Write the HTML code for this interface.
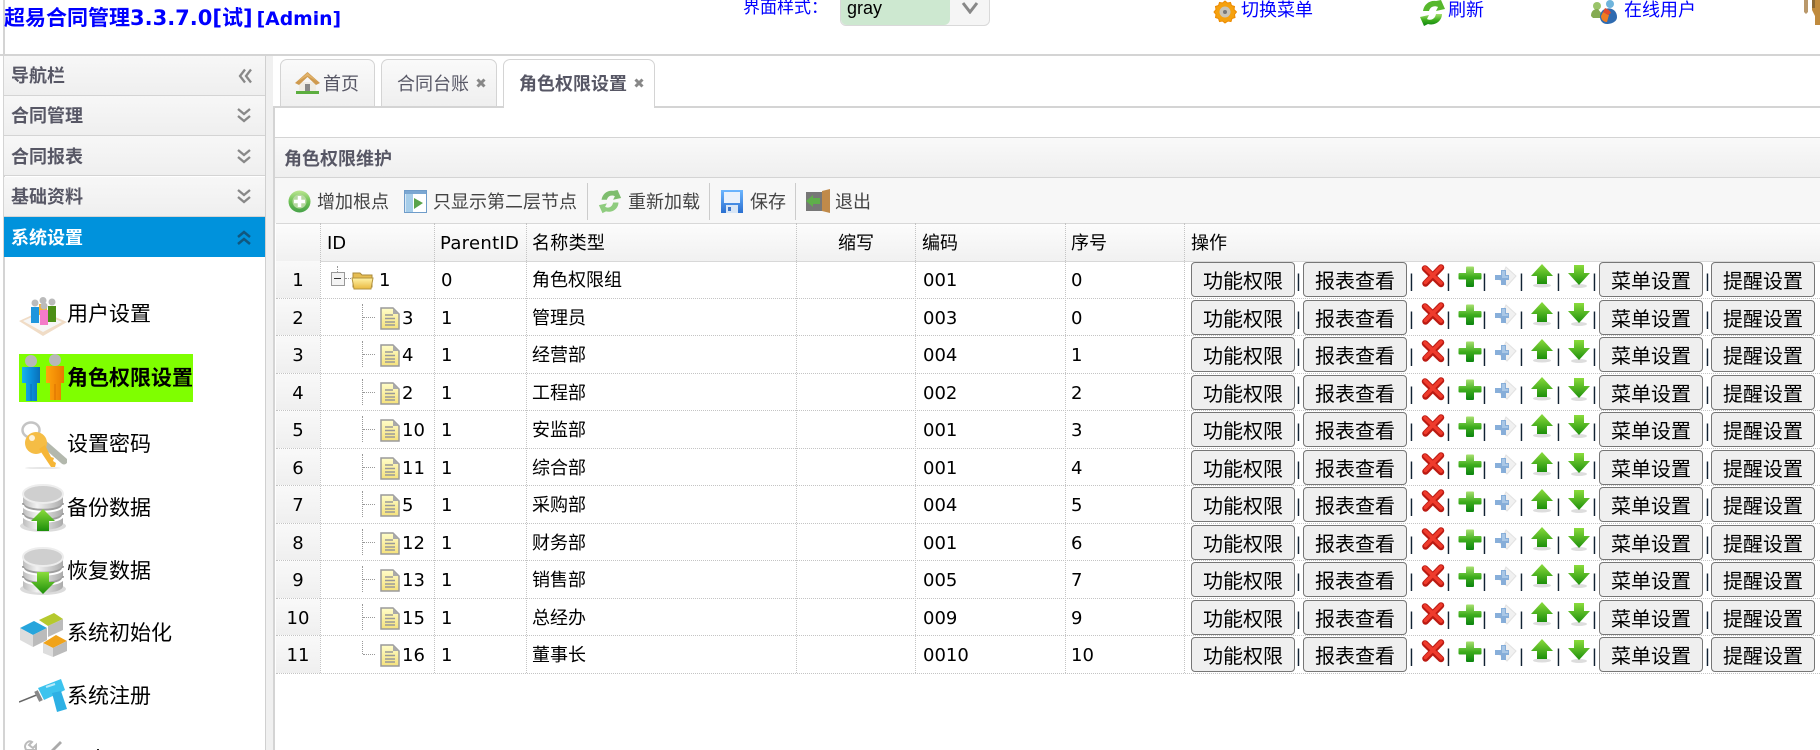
<!DOCTYPE html>
<html lang="zh"><head><meta charset="utf-8"><title>角色权限设置</title>
<style>
html,body{margin:0;padding:0;width:1820px;height:750px;overflow:hidden;background:#fff}
body{position:relative;font-family:"DejaVu Sans","Noto Sans CJK SC",sans-serif;font-size:18px;color:#000}
.a,.t,.r,.r *{position:absolute}
.t,.r i{white-space:nowrap;line-height:24px;font-style:normal}
.nav{left:4px;width:261px;height:39px;background:linear-gradient(#f7f7f7,#efefef);border-bottom:1px solid #d4d4d4}
.nav b{position:absolute;left:7px;top:9px;line-height:24px;color:#575765;font-size:18px}
.m{left:67px;font-size:21px;line-height:28px;white-space:nowrap}
.l{color:#00f}
.tb{color:#444;top:191px}
.tab{top:73px;color:#575765}
.h{color:#000;top:232px}
.vl{top:223px;height:450px;width:0;border-left:1px dotted #c4c4c4}
.r{left:276px;width:1544px;box-sizing:border-box;border-bottom:1px dotted #c4c4c4}
.r .n{left:0;top:0;bottom:0;width:44px;background:linear-gradient(#f9f9f9,#efefef);text-align:center;line-height:39px}
.r .v{top:8px}
.r svg{top:3px;width:24px;height:24px}
.r button{top:1px;width:104px;height:35px;padding:0;margin:0;box-sizing:border-box;background:#efefef;border:1px solid #767676;border-radius:4px;font:20px/24px "Noto Sans CJK SC",sans-serif;color:#000}
.r u{text-decoration:none;top:8px;font:18px/24px "Liberation Sans",sans-serif;width:5px;text-align:center;color:#123}
</style></head>
<body>
<svg width="0" height="0" style="position:absolute">
<defs>
<linearGradient id="g1" x1="0" y1="0" x2="0" y2="1"><stop offset="0" stop-color="#a8e070"/><stop offset=".5" stop-color="#3fae1d"/><stop offset="1" stop-color="#0c8410"/></linearGradient>
<linearGradient id="g2" x1="0" y1="0" x2="0" y2="1"><stop offset="0" stop-color="#8bdc3c"/><stop offset="1" stop-color="#1c8f0a"/></linearGradient>
<linearGradient id="g3" x1="0" y1="0" x2="1" y2="0"><stop offset="0" stop-color="#bdbdbd"/><stop offset=".35" stop-color="#f2f2f2"/><stop offset="1" stop-color="#aaa"/></linearGradient>
<linearGradient id="g4" x1="0" y1="0" x2="0" y2="1"><stop offset="0" stop-color="#6cb6ff"/><stop offset="1" stop-color="#2a6fd0"/></linearGradient>
<linearGradient id="g5" x1="0" y1="0" x2="0" y2="1"><stop offset="0" stop-color="#fff3a8"/><stop offset="1" stop-color="#e9b93f"/></linearGradient>
<linearGradient id="g6" x1="0" y1="0" x2="1" y2="0"><stop offset="0" stop-color="#16b5ee"/><stop offset=".5" stop-color="#0b90dc"/><stop offset="1" stop-color="#0a6fb8"/></linearGradient>
<linearGradient id="g7" x1="0" y1="0" x2="1" y2="0"><stop offset="0" stop-color="#ffa60d"/><stop offset="1" stop-color="#e87a00"/></linearGradient>
<linearGradient id="g8" x1="0" y1="0" x2="0" y2="1"><stop offset="0" stop-color="#fffdc8"/><stop offset="1" stop-color="#f6e27c"/></linearGradient>
<symbol id="ix" viewBox="0 0 24 24"><path d="M4 4.500 20 20M20 3.500 4.500 19.500" stroke="#bb1a12" stroke-width="6.500" stroke-linecap="round" fill="none"/><path d="M4 3.800 20 19M20 3 4.500 18.500" stroke="#ef3b2c" stroke-width="3.500" stroke-linecap="round" fill="none"/></symbol>
<symbol id="ip" viewBox="0 0 24 24"><path d="M9 2.500h6a1 1 0 0 1 1 1V9h6.500a1 1 0 0 1 1 1v4.500a1 1 0 0 1-1 1H16V22a1 1 0 0 1-1 1H9a1 1 0 0 1-1-1v-6.500H1.500a1 1 0 0 1-1-1V10a1 1 0 0 1 1-1H8V3.500a1 1 0 0 1 1-1z" fill="url(#g1)"/></symbol>
<symbol id="id" viewBox="0 0 24 24"><path d="M13 3 23 12 14 22 7 16z" fill="#f1f1f1" stroke="#e2e2e2"/><path d="M8 6h5v5h3v5h-3v5H8v-5H2v-5h6z" fill="#7ba6d6" opacity=".9"/><path d="M9 7h3v5h3v2H9z" fill="#a9c7e6"/></symbol>
<symbol id="iu" viewBox="0 0 24 24"><ellipse cx="12" cy="21.500" rx="9" ry="2" fill="#ddd"/><path d="M12 0 23 12H17V20H7V12H1z" fill="url(#g2)"/></symbol>
<symbol id="iv" viewBox="0 0 24 24"><ellipse cx="12" cy="22" rx="8" ry="2" fill="#ddd"/><path d="M7 1H17V9H23L12 21 1 9H7z" fill="url(#g2)"/></symbol>
<symbol id="if" viewBox="0 0 20 24"><path d="M1 2H13L19 8V23H1z" fill="url(#g8)" stroke="#9a9a9a" stroke-width="1.500"/><path d="M13 2V8H19z" fill="#aaa"/><path d="M5 9H13M5 12.500H15M5 16H15M5 19H15" stroke="#999" stroke-width="1.500"/></symbol>
<symbol id="dv" viewBox="0 0 16 15"><path d="M2 1 8 6 14 1M2 8 8 13 14 8" stroke="#888" stroke-width="2.300" fill="none"/></symbol>
<symbol id="cl" viewBox="0 0 10 10"><path d="M1.500 1.500 8.500 8.500M8.500 1.500 1.500 8.500" stroke="#888" stroke-width="3"/></symbol>
<symbol id="db" viewBox="0 0 48 48"><ellipse cx="24" cy="42" rx="23" ry="6" fill="#ccc" opacity=".7"/><path d="M4 9V39C4 48 44 48 44 39V9z" fill="url(#g3)"/><path d="M4 19C4 28 44 28 44 19M4 29C4 38 44 38 44 29" stroke="#9e9e9e" stroke-width="2" fill="none"/><path d="M4 21C4 30 44 30 44 21M4 31C4 40 44 40 44 31" stroke="#fff" stroke-width="2" fill="none"/><ellipse cx="24" cy="10" rx="20" ry="9" fill="#cfcfcf" stroke="#ededed" stroke-width="2"/></symbol>
</defs>
</svg>

<!-- top header -->
<div class="a" style="left:3px;top:0;width:2px;height:750px;background:#d4d4d4"></div>
<div class="t l" style="left:4px;top:4px;line-height:28px;font-weight:bold;font-size:21px;color:#00f">超易合同管理3.3.7.0[试]<span style="font-size:18.800px;margin-left:4px">[Admin]</span></div>
<div class="t l" style="left:743px;top:-4px;font-size:17px">界面样式：</div>
<div class="a" style="left:840px;top:-5px;width:148px;height:29px;border:1px solid #d9d9d9;border-radius:6px;background:#f5f5f5"></div>
<div class="a" style="left:841px;top:-4px;width:109px;height:29px;border-radius:0 0 6px 6px;background:#cde8d0"></div>
<div class="t" style="left:847px;top:-4px;font-family:'Liberation Sans',sans-serif">gray</div>
<svg class="a" style="left:961px;top:2px" width="18" height="12"><path d="M2 1 9 10 16 1" stroke="#888" stroke-width="3" fill="none"/></svg>

<svg class="a" style="left:1213px;top:0" width="24" height="24" viewBox="0 0 24 24"><path d="M12 1l2.500 2 3-.5 1 3 3 1-.5 3 2.500 2.500-2 2.500.5 3-3 1-1 3-3-.5L12 23l-2.500-2-3 .5-1-3-3-1 .5-3L1 12l2-2.500-.5-3 3-1 1-3 3 .5z" fill="#f5a10e" stroke="#ed8a00"/><circle cx="12" cy="12" r="5.500" fill="#c9c4b8"/><circle cx="12" cy="12" r="2" fill="#777"/></svg>
<div class="t l" style="left:1241px;top:-1px">切换菜单</div>
<svg class="a" style="left:1419px;top:0" width="27" height="27" viewBox="0 0 27 27"><path d="M4 11C5 4 11 0 17 1L22 0 26 9 17 11 19 7C15 5 11 7 10 11z" fill="#57b82d"/><path d="M23 14C23 21 16 26 9 24L5 26 1 17 10 15 8 19C12 21 16 19 17 14z" fill="url(#g1)"/></svg>
<div class="t l" style="left:1448px;top:-1px">刷新</div>
<svg class="a" style="left:1590px;top:0" width="28" height="24" viewBox="0 0 28 24"><ellipse cx="20" cy="4" rx="4" ry="4" fill="#6fb4dc"/><ellipse cx="7" cy="6" rx="4" ry="4" fill="#9ac46a"/><path d="M1 16C1 10 5 9 8 9L12 14V18H3z" fill="#85ab52"/><path d="M13 10C20 6 27 10 27 17 27 22 21 24 17 24 13 24 10 21 10 17 10 14 11 12 13 10z" fill="#2f6bb0"/><path d="M13 12 19 15 17 22C13 22 11 19 11 16z" fill="#ef7d22"/><path d="M15 8C17 9 20 10 21 13L18 15 13 12z" fill="#e14b2e"/></svg>
<div class="t l" style="left:1624px;top:-1px">在线用户</div>
<svg class="a" style="left:1803px;top:0" width="17" height="26" viewBox="0 0 17 26"><path d="M1 0H5V12L3 14 1 12z" fill="#b9986b"/><path d="M9 0H17V25H12V16L9 10z" fill="#c08b3e"/><path d="M9 0H12V8L9 8z" fill="#8d6a35"/></svg>
<div class="a" style="left:0;top:54px;width:1820px;height:2px;background:#d4d4d4"></div>

<!-- accordion -->
<div class="a nav" style="top:56px"><b>导航栏</b></div>
<div class="a nav" style="top:96px"><b>合同管理</b></div>
<div class="a nav" style="top:136px"><b style="top:10px">合同报表</b></div>
<div class="a nav" style="top:177px"><b>基础资料</b></div>
<div class="a" style="left:4px;top:217px;width:261px;height:40px;background:#0092dc"><b style="position:absolute;left:7px;top:10px;line-height:24px;color:#fff">系统设置</b></div>
<svg class="a" style="left:238px;top:68px" width="15" height="16" viewBox="0 0 15 15"><path d="M7 1 2 7.500 7 14M13 1 8 7.500 13 14" stroke="#888" stroke-width="2.300" fill="none"/></svg>
<svg class="a" style="left:236px;top:108px;width:16px;height:15px"><use href="#dv"/></svg>
<svg class="a" style="left:236px;top:149px;width:16px;height:15px"><use href="#dv"/></svg>
<svg class="a" style="left:236px;top:189px;width:16px;height:15px"><use href="#dv"/></svg>
<svg class="a" style="left:236px;top:230px" width="16" height="15" viewBox="0 0 16 15"><path d="M2 7 8 2 14 7M2 14 8 9 14 14" stroke="#11577f" stroke-width="2.500" fill="none"/></svg>
<div class="a" style="left:265px;top:56px;width:1px;height:694px;background:#d0d0d0"></div>
<div class="a" style="left:266px;top:56px;width:7px;height:694px;background:#f0f0f0"></div>

<!-- left menu -->
<svg class="a" style="left:19px;top:297px" width="48" height="39" viewBox="0 0 48 39"><path d="M0 24 22 14 48 25 24 39z" fill="#f0dcc6"/><path d="M4 24 22 16 43 25 24 35z" fill="#f6f6f6"/><circle cx="33" cy="5" r="3.500" fill="#bbb"/><path d="M29 9H37V25H29z" fill="#4c8f16"/><circle cx="24" cy="3.500" r="3.500" fill="#bbb"/><path d="M20 7H28V18H20z" fill="#f3b43d"/><circle cx="16" cy="6" r="3.500" fill="#bbb"/><path d="M12 10H20V26H12z" fill="#1e96dd"/><circle cx="25" cy="9" r="3.500" fill="#bbb"/><path d="M21 13H29V28H21z" fill="#f47bc8"/></svg>
<div class="t m" style="top:300px">用户设置</div>

<div class="a" style="left:19px;top:354px;width:174px;height:48px;background:#7fff00"></div>
<svg class="a" style="left:19px;top:354px" width="48" height="48" viewBox="0 0 48 48"><circle cx="12" cy="7" r="6" fill="#b8b8b8"/><path d="M3 13H21V29H18V47H7V29H3z" fill="url(#g6)"/><path d="M12 30V47" stroke="#0a6fb8"/><circle cx="36" cy="6" r="6" fill="#b8b8b8"/><path d="M27 12H45V29H42V46H31V29H27z" fill="url(#g7)"/><path d="M36 30V46" stroke="#d96f00"/></svg>
<div class="t m" style="top:364px;font-weight:bold">角色权限设置</div>

<svg class="a" style="left:19px;top:421px" width="48" height="48" viewBox="0 0 48 48"><path d="M22 20 45 40" stroke="#b3b8ad" stroke-width="7" stroke-linecap="round"/><ellipse cx="12" cy="9" rx="8.500" ry="7.500" fill="none" stroke="#c4c4c4" stroke-width="2.500"/><circle cx="17" cy="22" r="11" fill="#f5bd45"/><circle cx="13" cy="17" r="3" fill="#fff" opacity=".8"/><path d="M20 28 32 46H36L37 42 34 40 35 37 32 36 26 24z" fill="#f6b636"/><ellipse cx="24" cy="47" rx="18" ry="1" fill="#e5e5e5"/></svg>
<div class="t m" style="top:430px">设置密码</div>

<svg class="a" style="left:19px;top:484px;width:48px;height:48px"><use href="#db"/><path d="M24 25 36 37H30V47H18V37H12z" fill="url(#g2)"/></svg>
<div class="t m" style="top:494px">备份数据</div>
<svg class="a" style="left:19px;top:547px;width:48px;height:48px"><use href="#db"/><path d="M18 25H30V35H36L24 47 12 35H18z" fill="url(#g2)"/></svg>
<div class="t m" style="top:557px">恢复数据</div>

<svg class="a" style="left:19px;top:613px" width="48" height="44" viewBox="0 0 48 44"><path d="M1 15 15 8 28 15 14 22z" fill="#27a5dc"/><path d="M1 15V27L14 34V22z" fill="#ddd"/><path d="M14 22V34L28 27V15z" fill="#bbb"/><path d="M20 7 35 0 44 6 29 13z" fill="#b5c92e"/><path d="M29 13V24L44 17V6z" fill="#bbb"/><path d="M24 30 37 22 48 28 34 35z" fill="#f0a31a"/><path d="M24 30V40L34 44V35z" fill="#ddd"/><path d="M34 35V44L48 38V28z" fill="#bbb"/></svg>
<div class="t m" style="top:619px">系统初始化</div>

<svg class="a" style="left:19px;top:679px" width="48" height="33" viewBox="0 0 48 33"><path d="M0 23 20 15" stroke="#666" stroke-width="1.500"/><path d="M17 12 22 22" stroke="#888" stroke-width="4"/><path d="M19 9 42 0 46 11 38 15 25 21z" fill="#3cc3ee"/><path d="M33 14 42 12 48 30 38 33z" fill="#2db0e4"/><path d="M27 8 36 5" stroke="#b8eafa" stroke-width="2"/></svg>
<div class="t m" style="top:682px">系统注册</div>

<svg class="a" style="left:23px;top:739px" width="42" height="11" viewBox="0 0 42 11"><path d="M2 8C2 4 6 1 9 3L6 6 10 9 13 6V11H3z" fill="none" stroke="#bbb" stroke-width="2"/><path d="M28 11 37 2 39 4 32 11z" fill="#aaa"/></svg>
<div class="a" style="left:97px;top:749px;width:2px;height:1px;background:#222"></div>

<!-- tabs -->
<div class="a" style="left:273px;top:106px;width:1547px;height:2px;background:#d4d4d4"></div>
<div class="a" style="left:273px;top:106px;width:2px;height:644px;background:#d4d4d4"></div>
<div class="a" style="left:280px;top:59px;width:95px;height:47px;box-sizing:border-box;border:1px solid #d4d4d4;border-bottom:0;border-radius:7px 7px 0 0;background:linear-gradient(#fafafa,#efefef)"></div>
<div class="a" style="left:381px;top:59px;width:116px;height:47px;box-sizing:border-box;border:1px solid #d4d4d4;border-bottom:0;border-radius:7px 7px 0 0;background:linear-gradient(#fafafa,#efefef)"></div>
<div class="a" style="left:503px;top:59px;width:152px;height:49px;box-sizing:border-box;border:1px solid #d4d4d4;border-bottom:0;border-radius:7px 7px 0 0;background:#fff"></div>
<svg class="a" style="left:295px;top:71px" width="25" height="23" viewBox="0 0 25 23"><path d="M4 11H21V21H4z" fill="#efece4"/><path d="M10 13H15V21H10z" fill="#888"/><path d="M0 12 12.500 1 25 12 21 14 12.500 6 4 14z" fill="#cf9a4e"/><path d="M3 10 12.500 2 22 10 12.500 5z" fill="#e2b36b"/><path d="M1 20H24V23H1z" fill="#5cae3f"/></svg>
<div class="t tab" style="left:323px">首页</div>
<div class="t tab" style="left:397px">合同台账</div>
<svg class="a" style="left:476px;top:78px;width:10px;height:10px"><use href="#cl"/></svg>
<div class="t tab" style="left:519px;font-weight:bold">角色权限设置</div>
<svg class="a" style="left:634px;top:78px;width:10px;height:10px"><use href="#cl"/></svg>

<!-- panel title & toolbar -->
<div class="a" style="left:275px;top:137px;width:1545px;height:41px;box-sizing:border-box;border-top:1px solid #d4d4d4;border-bottom:1px solid #d4d4d4;background:linear-gradient(#f9f9f9,#efefef)"></div>
<div class="t" style="left:284px;top:148px;color:#575765;font-weight:bold">角色权限维护</div>
<div class="a" style="left:275px;top:178px;width:1545px;height:45px;background:#f7f7f7"></div>
<svg class="a" style="left:288px;top:190px" width="23" height="23" viewBox="0 0 23 23"><circle cx="11.500" cy="11.500" r="11" fill="url(#g1)" opacity=".75"/><circle cx="11.500" cy="11.500" r="7" fill="#b6d8a0"/><path d="M11.500 6V17M6 11.500H17" stroke="#fff" stroke-width="3.500"/></svg>
<div class="t tb" style="left:317px">增加根点</div>
<svg class="a" style="left:404px;top:190px" width="23" height="23" viewBox="0 0 23 23"><rect x=".5" y=".5" width="22" height="22" fill="#d8e8f5" stroke="#6f9cc9"/><rect x="1" y="1" width="21" height="3" fill="#7ba7d2"/><rect x="9" y="4" width="13" height="18" fill="#fff"/><path d="M10 8 19 13 10 19z" fill="#5aa34a"/><rect x="2" y="4" width="7" height="18" fill="#a6cde9"/></svg>
<div class="t tb" style="left:433px">只显示第二层节点</div>
<div class="a" style="left:587px;top:183px;width:1px;height:37px;background:#ccc"></div>
<svg class="a" style="left:598px;top:190px" width="24" height="24" viewBox="0 0 27 27"><path d="M4 11C5 4 11 0 17 1L22 0 26 9 17 11 19 7C15 5 11 7 10 11z" fill="#5fae4b" opacity=".8"/><path d="M23 14C23 21 16 26 9 24L5 26 1 17 10 15 8 19C12 21 16 19 17 14z" fill="#7cc46a" opacity=".85"/></svg>
<div class="t tb" style="left:628px">重新加载</div>
<div class="a" style="left:709px;top:183px;width:1px;height:37px;background:#ccc"></div>
<svg class="a" style="left:721px;top:190px" width="22" height="23" viewBox="0 0 22 23"><rect width="22" height="23" fill="url(#g4)"/><rect x="3" y="2" width="16" height="11" fill="#e9f1fb"/><rect x="5" y="15" width="12" height="8" fill="#d8e6f6"/><rect x="7" y="17" width="3" height="4" fill="#3b74c8"/></svg>
<div class="t tb" style="left:750px">保存</div>
<div class="a" style="left:795px;top:183px;width:1px;height:37px;background:#ccc"></div>
<svg class="a" style="left:806px;top:189px" width="24" height="24" viewBox="0 0 24 24"><rect x="0" y="3" width="16" height="19" fill="#777"/><path d="M16 2 24 0V24L16 22z" fill="#c08a4a"/><path d="M0 12 7 6V9H14V15H7V18z" fill="#5fae4b"/></svg>
<div class="t tb" style="left:835px">退出</div>

<!-- grid header -->
<div class="a" style="left:276px;top:223px;width:1544px;height:39px;box-sizing:border-box;border-top:1px solid #d8d8d8;border-bottom:1px solid #d8d8d8;background:linear-gradient(#fcfcfc,#f1f1f1)"></div>
<div class="t h" style="left:327px">ID</div>
<div class="t h" style="left:440px;letter-spacing:.3px">ParentID</div>
<div class="t h" style="left:532px;letter-spacing:.3px">名称类型</div>
<div class="t h" style="left:838px">缩写</div>
<div class="t h" style="left:922px">编码</div>
<div class="t h" style="left:1071px">序号</div>
<div class="t h" style="left:1191px">操作</div>

<!-- rows -->
<div class="r" style="top:261px;height:38px"><i class="n">1</i><i class="v" style="left:103px">1</i><i class="v" style="left:165px">0</i><i class="v" style="left:256px">角色权限组</i><i class="v" style="left:647px">001</i><i class="v" style="left:795px">0</i>
<div style="left:61px;top:5px;height:6px;border-left:1px dotted #999"></div><div style="left:55px;top:11px;width:12px;height:12px;border:1px solid #999;background:#f4f4f4"></div><div style="left:58px;top:17px;width:7px;height:1px;background:#333"></div><div style="left:69px;top:17px;width:6px;border-top:1px dotted #999"></div>
<svg style="left:75px;top:9px;width:24px;height:20px" viewBox="0 0 24 20"><path d="M2 3H9L11 5H21V17H2z" fill="#e6bd52" stroke="#a98a3a"/><path d="M1 8H22L20 19H3z" fill="url(#g5)" stroke="#b3933f"/></svg>
<button style="left:915px">功能权限</button><u style="left:1020px">|</u><button style="left:1027px">报表查看</button><u style="left:1133px">|</u><svg style="left:1145px"><use href="#ix"/></svg><u style="left:1170px">|</u><svg style="left:1182px"><use href="#ip"/></svg><u style="left:1206px">|</u><svg style="left:1217px"><use href="#id"/></svg><u style="left:1243px">|</u><svg style="left:1254px"><use href="#iu"/></svg><u style="left:1280px">|</u><svg style="left:1291px"><use href="#iv"/></svg><u style="left:1316px">|</u><button style="left:1323px">菜单设置</button><u style="left:1429px">|</u><button style="left:1435px">提醒设置</button></div>

<div class="r" style="top:299px;height:37px"><i class="n">2</i><div style="left:86px;top:5px;height:26px;border-left:1px dotted #999"></div><div style="left:87px;top:18px;width:12px;border-top:1px dotted #999"></div><svg style="left:102px;top:7px"><use href="#if"/></svg><i class="v" style="left:126px">3</i><i class="v" style="left:165px">1</i><i class="v" style="left:256px">管理员</i><i class="v" style="left:647px">003</i><i class="v" style="left:795px">0</i>
<button style="left:915px">功能权限</button><u style="left:1020px">|</u><button style="left:1027px">报表查看</button><u style="left:1133px">|</u><svg style="left:1145px"><use href="#ix"/></svg><u style="left:1170px">|</u><svg style="left:1182px"><use href="#ip"/></svg><u style="left:1206px">|</u><svg style="left:1217px"><use href="#id"/></svg><u style="left:1243px">|</u><svg style="left:1254px"><use href="#iu"/></svg><u style="left:1280px">|</u><svg style="left:1291px"><use href="#iv"/></svg><u style="left:1316px">|</u><button style="left:1323px">菜单设置</button><u style="left:1429px">|</u><button style="left:1435px">提醒设置</button></div>

<div class="r" style="top:336px;height:38px"><i class="n">3</i><div style="left:86px;top:5px;height:26px;border-left:1px dotted #999"></div><div style="left:87px;top:18px;width:12px;border-top:1px dotted #999"></div><svg style="left:102px;top:7px"><use href="#if"/></svg><i class="v" style="left:126px">4</i><i class="v" style="left:165px">1</i><i class="v" style="left:256px">经营部</i><i class="v" style="left:647px">004</i><i class="v" style="left:795px">1</i>
<button style="left:915px">功能权限</button><u style="left:1020px">|</u><button style="left:1027px">报表查看</button><u style="left:1133px">|</u><svg style="left:1145px"><use href="#ix"/></svg><u style="left:1170px">|</u><svg style="left:1182px"><use href="#ip"/></svg><u style="left:1206px">|</u><svg style="left:1217px"><use href="#id"/></svg><u style="left:1243px">|</u><svg style="left:1254px"><use href="#iu"/></svg><u style="left:1280px">|</u><svg style="left:1291px"><use href="#iv"/></svg><u style="left:1316px">|</u><button style="left:1323px">菜单设置</button><u style="left:1429px">|</u><button style="left:1435px">提醒设置</button></div>

<div class="r" style="top:374px;height:37px"><i class="n">4</i><div style="left:86px;top:5px;height:26px;border-left:1px dotted #999"></div><div style="left:87px;top:18px;width:12px;border-top:1px dotted #999"></div><svg style="left:102px;top:7px"><use href="#if"/></svg><i class="v" style="left:126px">2</i><i class="v" style="left:165px">1</i><i class="v" style="left:256px">工程部</i><i class="v" style="left:647px">002</i><i class="v" style="left:795px">2</i>
<button style="left:915px">功能权限</button><u style="left:1020px">|</u><button style="left:1027px">报表查看</button><u style="left:1133px">|</u><svg style="left:1145px"><use href="#ix"/></svg><u style="left:1170px">|</u><svg style="left:1182px"><use href="#ip"/></svg><u style="left:1206px">|</u><svg style="left:1217px"><use href="#id"/></svg><u style="left:1243px">|</u><svg style="left:1254px"><use href="#iu"/></svg><u style="left:1280px">|</u><svg style="left:1291px"><use href="#iv"/></svg><u style="left:1316px">|</u><button style="left:1323px">菜单设置</button><u style="left:1429px">|</u><button style="left:1435px">提醒设置</button></div>

<div class="r" style="top:411px;height:38px"><i class="n">5</i><div style="left:86px;top:5px;height:26px;border-left:1px dotted #999"></div><div style="left:87px;top:18px;width:12px;border-top:1px dotted #999"></div><svg style="left:102px;top:7px"><use href="#if"/></svg><i class="v" style="left:126px">10</i><i class="v" style="left:165px">1</i><i class="v" style="left:256px">安监部</i><i class="v" style="left:647px">001</i><i class="v" style="left:795px">3</i>
<button style="left:915px">功能权限</button><u style="left:1020px">|</u><button style="left:1027px">报表查看</button><u style="left:1133px">|</u><svg style="left:1145px"><use href="#ix"/></svg><u style="left:1170px">|</u><svg style="left:1182px"><use href="#ip"/></svg><u style="left:1206px">|</u><svg style="left:1217px"><use href="#id"/></svg><u style="left:1243px">|</u><svg style="left:1254px"><use href="#iu"/></svg><u style="left:1280px">|</u><svg style="left:1291px"><use href="#iv"/></svg><u style="left:1316px">|</u><button style="left:1323px">菜单设置</button><u style="left:1429px">|</u><button style="left:1435px">提醒设置</button></div>

<div class="r" style="top:449px;height:37px"><i class="n">6</i><div style="left:86px;top:5px;height:26px;border-left:1px dotted #999"></div><div style="left:87px;top:18px;width:12px;border-top:1px dotted #999"></div><svg style="left:102px;top:7px"><use href="#if"/></svg><i class="v" style="left:126px">11</i><i class="v" style="left:165px">1</i><i class="v" style="left:256px">综合部</i><i class="v" style="left:647px">001</i><i class="v" style="left:795px">4</i>
<button style="left:915px">功能权限</button><u style="left:1020px">|</u><button style="left:1027px">报表查看</button><u style="left:1133px">|</u><svg style="left:1145px"><use href="#ix"/></svg><u style="left:1170px">|</u><svg style="left:1182px"><use href="#ip"/></svg><u style="left:1206px">|</u><svg style="left:1217px"><use href="#id"/></svg><u style="left:1243px">|</u><svg style="left:1254px"><use href="#iu"/></svg><u style="left:1280px">|</u><svg style="left:1291px"><use href="#iv"/></svg><u style="left:1316px">|</u><button style="left:1323px">菜单设置</button><u style="left:1429px">|</u><button style="left:1435px">提醒设置</button></div>

<div class="r" style="top:486px;height:38px"><i class="n">7</i><div style="left:86px;top:5px;height:26px;border-left:1px dotted #999"></div><div style="left:87px;top:18px;width:12px;border-top:1px dotted #999"></div><svg style="left:102px;top:7px"><use href="#if"/></svg><i class="v" style="left:126px">5</i><i class="v" style="left:165px">1</i><i class="v" style="left:256px">采购部</i><i class="v" style="left:647px">004</i><i class="v" style="left:795px">5</i>
<button style="left:915px">功能权限</button><u style="left:1020px">|</u><button style="left:1027px">报表查看</button><u style="left:1133px">|</u><svg style="left:1145px"><use href="#ix"/></svg><u style="left:1170px">|</u><svg style="left:1182px"><use href="#ip"/></svg><u style="left:1206px">|</u><svg style="left:1217px"><use href="#id"/></svg><u style="left:1243px">|</u><svg style="left:1254px"><use href="#iu"/></svg><u style="left:1280px">|</u><svg style="left:1291px"><use href="#iv"/></svg><u style="left:1316px">|</u><button style="left:1323px">菜单设置</button><u style="left:1429px">|</u><button style="left:1435px">提醒设置</button></div>

<div class="r" style="top:524px;height:37px"><i class="n">8</i><div style="left:86px;top:5px;height:26px;border-left:1px dotted #999"></div><div style="left:87px;top:18px;width:12px;border-top:1px dotted #999"></div><svg style="left:102px;top:7px"><use href="#if"/></svg><i class="v" style="left:126px">12</i><i class="v" style="left:165px">1</i><i class="v" style="left:256px">财务部</i><i class="v" style="left:647px">001</i><i class="v" style="left:795px">6</i>
<button style="left:915px">功能权限</button><u style="left:1020px">|</u><button style="left:1027px">报表查看</button><u style="left:1133px">|</u><svg style="left:1145px"><use href="#ix"/></svg><u style="left:1170px">|</u><svg style="left:1182px"><use href="#ip"/></svg><u style="left:1206px">|</u><svg style="left:1217px"><use href="#id"/></svg><u style="left:1243px">|</u><svg style="left:1254px"><use href="#iu"/></svg><u style="left:1280px">|</u><svg style="left:1291px"><use href="#iv"/></svg><u style="left:1316px">|</u><button style="left:1323px">菜单设置</button><u style="left:1429px">|</u><button style="left:1435px">提醒设置</button></div>

<div class="r" style="top:561px;height:38px"><i class="n">9</i><div style="left:86px;top:5px;height:26px;border-left:1px dotted #999"></div><div style="left:87px;top:18px;width:12px;border-top:1px dotted #999"></div><svg style="left:102px;top:7px"><use href="#if"/></svg><i class="v" style="left:126px">13</i><i class="v" style="left:165px">1</i><i class="v" style="left:256px">销售部</i><i class="v" style="left:647px">005</i><i class="v" style="left:795px">7</i>
<button style="left:915px">功能权限</button><u style="left:1020px">|</u><button style="left:1027px">报表查看</button><u style="left:1133px">|</u><svg style="left:1145px"><use href="#ix"/></svg><u style="left:1170px">|</u><svg style="left:1182px"><use href="#ip"/></svg><u style="left:1206px">|</u><svg style="left:1217px"><use href="#id"/></svg><u style="left:1243px">|</u><svg style="left:1254px"><use href="#iu"/></svg><u style="left:1280px">|</u><svg style="left:1291px"><use href="#iv"/></svg><u style="left:1316px">|</u><button style="left:1323px">菜单设置</button><u style="left:1429px">|</u><button style="left:1435px">提醒设置</button></div>

<div class="r" style="top:599px;height:37px"><i class="n">10</i><div style="left:86px;top:5px;height:26px;border-left:1px dotted #999"></div><div style="left:87px;top:18px;width:12px;border-top:1px dotted #999"></div><svg style="left:102px;top:7px"><use href="#if"/></svg><i class="v" style="left:126px">15</i><i class="v" style="left:165px">1</i><i class="v" style="left:256px">总经办</i><i class="v" style="left:647px">009</i><i class="v" style="left:795px">9</i>
<button style="left:915px">功能权限</button><u style="left:1020px">|</u><button style="left:1027px">报表查看</button><u style="left:1133px">|</u><svg style="left:1145px"><use href="#ix"/></svg><u style="left:1170px">|</u><svg style="left:1182px"><use href="#ip"/></svg><u style="left:1206px">|</u><svg style="left:1217px"><use href="#id"/></svg><u style="left:1243px">|</u><svg style="left:1254px"><use href="#iu"/></svg><u style="left:1280px">|</u><svg style="left:1291px"><use href="#iv"/></svg><u style="left:1316px">|</u><button style="left:1323px">菜单设置</button><u style="left:1429px">|</u><button style="left:1435px">提醒设置</button></div>

<div class="r" style="top:636px;height:38px"><i class="n">11</i><div style="left:86px;top:5px;height:13px;border-left:1px dotted #999"></div><div style="left:87px;top:18px;width:12px;border-top:1px dotted #999"></div><svg style="left:102px;top:7px"><use href="#if"/></svg><i class="v" style="left:126px">16</i><i class="v" style="left:165px">1</i><i class="v" style="left:256px">董事长</i><i class="v" style="left:647px">0010</i><i class="v" style="left:795px">10</i>
<button style="left:915px">功能权限</button><u style="left:1020px">|</u><button style="left:1027px">报表查看</button><u style="left:1133px">|</u><svg style="left:1145px"><use href="#ix"/></svg><u style="left:1170px">|</u><svg style="left:1182px"><use href="#ip"/></svg><u style="left:1206px">|</u><svg style="left:1217px"><use href="#id"/></svg><u style="left:1243px">|</u><svg style="left:1254px"><use href="#iu"/></svg><u style="left:1280px">|</u><svg style="left:1291px"><use href="#iv"/></svg><u style="left:1316px">|</u><button style="left:1323px">菜单设置</button><u style="left:1429px">|</u><button style="left:1435px">提醒设置</button></div>

<!-- column dotted lines -->
<div class="a vl" style="left:320px"></div>
<div class="a vl" style="left:434px"></div>
<div class="a vl" style="left:526px"></div>
<div class="a vl" style="left:796px"></div>
<div class="a vl" style="left:915px"></div>
<div class="a vl" style="left:1065px"></div>
<div class="a vl" style="left:1184px"></div>
</body></html>
